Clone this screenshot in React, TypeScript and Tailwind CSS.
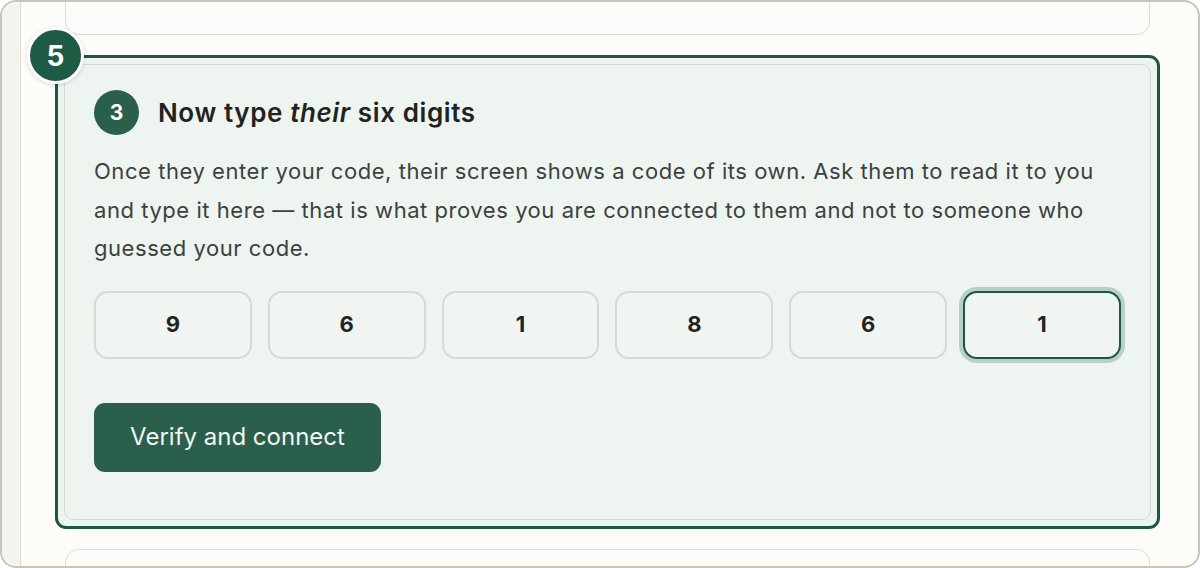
const digits = ["9", "6", "1", "8", "6", "1"];

export default function App() {
  return (
    <div
      className="h-[568px] w-[1200px] overflow-hidden bg-white"
      style={{ fontFamily: "Inter, 'Noto Sans', sans-serif" }}
    >
      <div className="flex h-full overflow-hidden rounded-[16px] border-2 border-[#c8c6ba] bg-[#fdfcf9]">
        <div className="w-[19px] shrink-0 border-r border-[#e2dfd7] bg-[#f5f3ee]" />
        <div className="flex flex-1 flex-col">
          <div className="ml-[44px] mr-[48px] h-[33px] shrink-0 rounded-b-[14px] border border-t-0 border-[#dedbd4] bg-[#fdfcfa]" />

          <div className="relative ml-[34px] mr-[38px] mt-[20px] shrink-0 rounded-[11px] border-[3px] border-[#1d5642] bg-[#eef4f0] p-[6px]">
            <div className="absolute -left-[31px] -top-[31px] flex h-[57px] w-[57px] items-center justify-center rounded-full border-[3px] border-white bg-[#1f5a45] text-[28px] font-bold text-white shadow-[0_1px_4px_rgba(0,0,0,0.15)]">
              5
            </div>
            <div className="rounded-[10px] border border-[#d3d8d1] bg-[#eef4f0] px-[29px] pb-[47px] pt-[25px]">
              <div className="flex items-center gap-[19px]">
                <div className="flex h-[45px] w-[45px] items-center justify-center rounded-full bg-[#2a5f4b] text-[21px] font-bold text-white">
                  3
                </div>
                <h2 className="text-[26px] font-semibold tracking-[0.6px] text-[#1f2421]">
                  Now type <em className="italic">their</em> six digits
                </h2>
              </div>
              <p className="mt-[17px] text-[22px] leading-[38.5px] tracking-[0.55px] text-[#3b423e]">
                Once they enter your code, their screen shows a code of its own. Ask them to read it to you
                and type it here — that is what proves you are connected to them and not to someone who
                guessed your code.
              </p>
              <div className="mt-[23px] grid grid-cols-6 gap-4">
                {digits.map((d, i) => (
                  <div
                    key={i}
                    className={
                      i === 5
                        ? "flex h-[68px] items-center justify-center rounded-[14px] border-2 border-[#1d5642] bg-[#f0f5f1] text-[22px] font-bold text-[#1f2421] shadow-[0_0_0_4px_#b9d0c4]"
                        : "flex h-[68px] items-center justify-center rounded-[14px] border-2 border-[#d5dbd3] bg-[#f0f5f1] text-[22px] font-bold text-[#1f2421]"
                    }
                  >
                    {d}
                  </div>
                ))}
              </div>
              <button className="mt-[44px] h-[69px] w-[287px] rounded-[11px] bg-[#2a5f4b] text-[24px] text-[#f1f6f3]">
                Verify and connect
              </button>
            </div>
          </div>

          <div className="ml-[44px] mr-[48px] mt-[20px] h-[40px] shrink-0 rounded-t-[14px] border border-b-0 border-[#e2dfd8] bg-[#fdfcfa]" />
        </div>
      </div>
    </div>
  );
}
